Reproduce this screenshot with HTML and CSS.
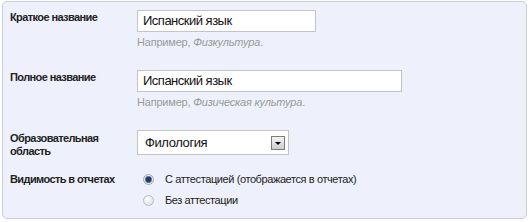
FILE: index.html
```html
<!DOCTYPE html>
<html lang="ru">
<head>
<meta charset="utf-8">
<link rel="stylesheet" href="styles.css">
</head>
<body>
<div class="panel">
  <div class="row row-short">
    <div class="label">Краткое название</div>
    <div class="field">
      <div class="input input-short">Испанский язык</div>
      <div class="hint">Например, <i>Физкультура</i>.</div>
    </div>
  </div>
  <div class="row row-full">
    <div class="label">Полное название</div>
    <div class="field">
      <div class="input input-full">Испанский язык</div>
      <div class="hint">Например, <i>Физическая культура</i>.</div>
    </div>
  </div>
  <div class="row row-area">
    <div class="label label-two">Образовательная<br>область</div>
    <div class="field">
      <div class="select">
        <span class="select-text">Филология</span>
        <span class="select-btn"><span class="arrow"></span></span>
      </div>
    </div>
  </div>
  <div class="row row-vis">
    <div class="label">Видимость в отчетах</div>
    <div class="field radios">
      <div class="radio-line"><span class="radio checked"></span><span>С аттестацией (отображается в отчетах)</span></div>
      <div class="radio-line"><span class="radio"></span><span>Без аттестации</span></div>
    </div>
  </div>
</div>
</body>
</html>
```
FILE: styles.css
```css
html, body {
  margin: 0;
  padding: 0;
  background: #ffffff;
}
body {
  font-family: "Liberation Sans", Arial, sans-serif;
  color: #222;
}
.panel {
  margin: 1px 2px 0 2px;
  height: 218px;
  box-sizing: border-box;
  border: 1px solid #c9cdd6;
  border-radius: 5px;
  background: #eef1fb;
  padding: 8px 0 0 7px;
}
.row {
  display: grid;
  grid-template-columns: 127px 1fr;
}
.label {
  font-size: 11px;
  font-weight: bold;
  letter-spacing: -0.6px;
  line-height: 14px;
  padding-top: 0;
}
.label-two {
  line-height: 13px;
  padding-top: 2px;
}
.input {
  box-sizing: border-box;
  height: 22px;
  background: #fff;
  border: 1px solid #c4c4c4;
  font-size: 13px;
  letter-spacing: -0.5px;
  line-height: 20px;
  padding-left: 5px;
  color: #111;
}
.input-short { width: 179px; }
.input-full { width: 265px; }
.hint {
  font-size: 11px;
  color: #9a9a9a;
  margin-top: 4px;
  line-height: 13px;
  letter-spacing: -0.2px;
}
.row-full { margin-top: 21px; }
.row-area { margin-top: 21px; }
.select {
  box-sizing: border-box;
  width: 152px;
  height: 25px;
  background: #fff;
  border: 1px solid #c4c4c4;
  display: flex;
  align-items: center;
  justify-content: space-between;
  padding: 0 3px 0 7px;
  font-size: 13px;
  letter-spacing: -0.4px;
  color: #111;
}
.select-btn {
  width: 12px;
  height: 12px;
  border: 1px solid #7d7d7d;
  background: linear-gradient(#f2f2f2, #cfcfcf);
  display: flex;
  align-items: center;
  justify-content: center;
}
.arrow {
  width: 0;
  height: 0;
  border-left: 3px solid transparent;
  border-right: 3px solid transparent;
  border-top: 3px solid #000;
  margin-top: 1px;
}
.row-vis { margin-top: 14px; }
.radios {
  display: flex;
  flex-direction: column;
  gap: 7px;
  padding-top: 0;
}
.radio-line {
  display: flex;
  align-items: center;
  font-size: 11px;
  letter-spacing: -0.4px;
  line-height: 14px;
  color: #222;
}
.radio {
  width: 9px;
  height: 9px;
  border-radius: 50%;
  border: 1px solid #b9bcc2;
  background: radial-gradient(circle at 40% 35%, #ffffff 0%, #d9dbe0 90%);
  margin-left: 6px;
  margin-right: 11px;
  flex: none;
}
.radio.checked {
  background: radial-gradient(circle, #1f3f6b 0 2.5px, #5c7394 3px, #e3e5ea 4px, #c9ccd2 100%);
  border-color: #a8acb4;
}
```
